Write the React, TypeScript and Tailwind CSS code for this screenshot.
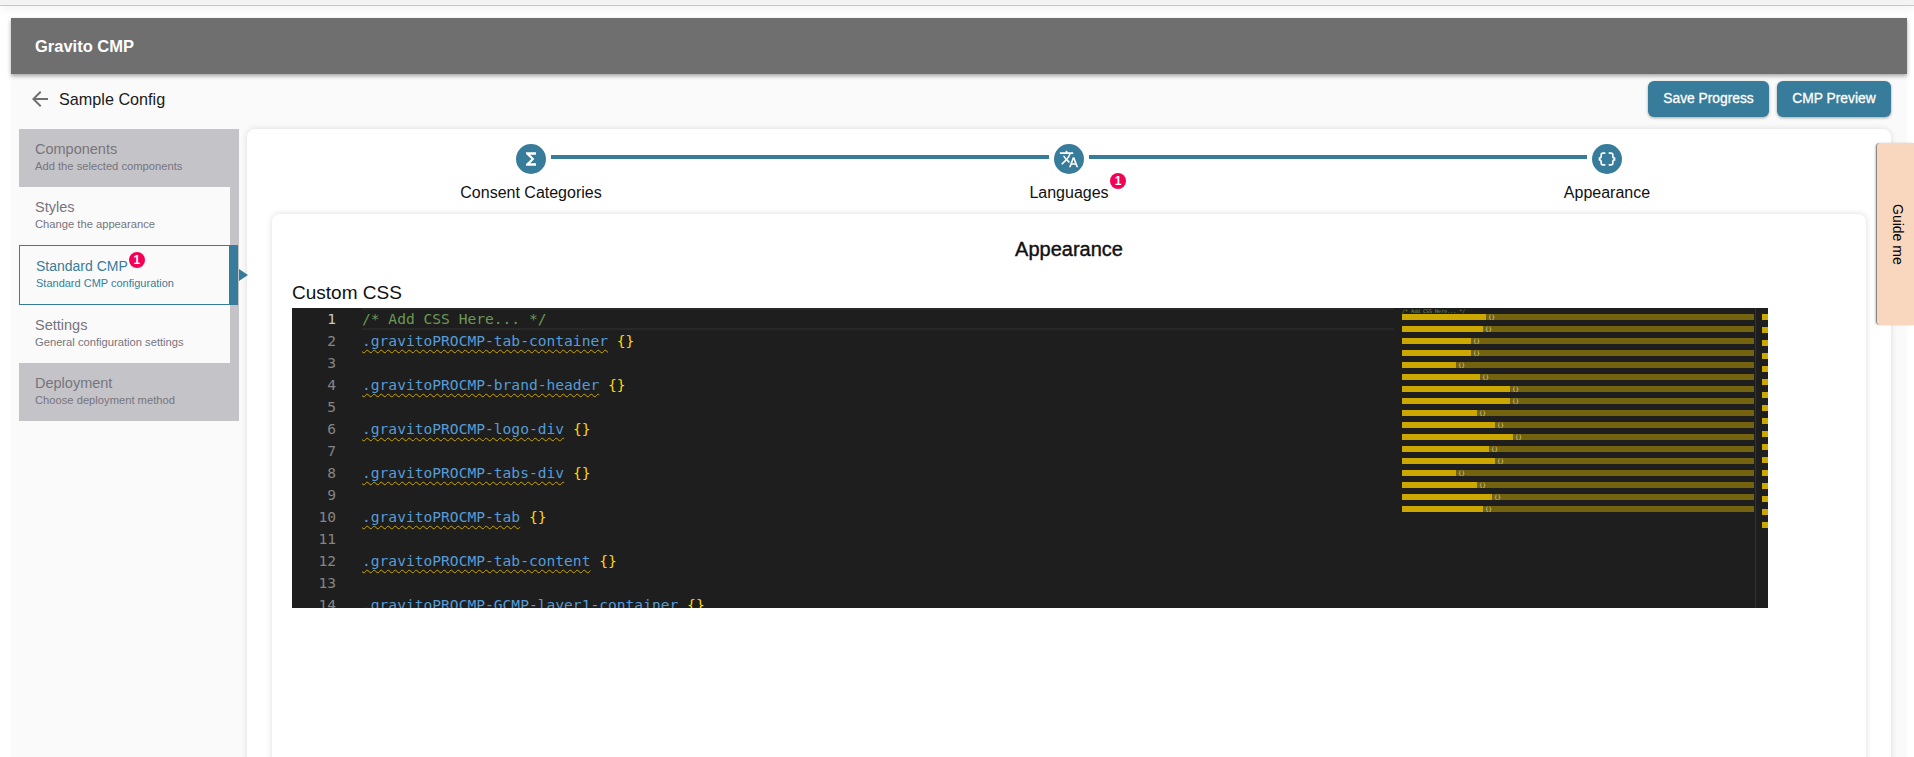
const lines = [
  "/* Add CSS Here... */",
  ".gravitoPROCMP-tab-container",
  "",
  ".gravitoPROCMP-brand-header",
  "",
  ".gravitoPROCMP-logo-div",
  "",
  ".gravitoPROCMP-tabs-div",
  "",
  ".gravitoPROCMP-tab",
  "",
  ".gravitoPROCMP-tab-content",
  "",
  ".gravitoPROCMP-GCMP-layer1-container",
];

const minimapBars = [84, 81, 69, 69, 54, 78, 108, 108, 75, 93, 111, 87, 93, 54, 75, 90, 81];

const navItems = [
  { title: "Components", sub: "Add the selected components", state: "disabled" },
  { title: "Styles", sub: "Change the appearance", state: "idle" },
  { title: "Standard CMP", sub: "Standard CMP configuration", state: "active" },
  { title: "Settings", sub: "General configuration settings", state: "idle" },
  { title: "Deployment", sub: "Choose deployment method", state: "disabled" },
];

function Badge() {
  return (
    <span className="flex h-4 w-4 items-center justify-center rounded-full bg-[#f50057] text-[12px] font-bold leading-none text-white">
      1
    </span>
  );
}

function StepCircle({ d }: { d: string }) {
  return (
    <div className="flex h-[30px] w-[30px] shrink-0 items-center justify-center rounded-full bg-[#387c9b]">
      <svg viewBox="0 0 24 24" className="h-5 w-5" fill="#fff">
        <path d={d} />
      </svg>
    </div>
  );
}

function Sidebar() {
  return (
    <div className="relative h-[292px] w-[220px] shrink-0 bg-[#c4c3c8]">
      {navItems.map((item) => {
        if (item.state === "active") {
          return (
            <div key={item.title} className="relative flex h-[60px] w-[219px] border border-[#387c9b] bg-[#fafafa]">
              <div className="flex-1 pl-[16px] pt-[10px] text-[#387c9b]">
                <div className="flex items-start text-[14px] leading-[20px]">
                  {item.title}
                  <span className="ml-[1px] mt-[-4px]">
                    <Badge />
                  </span>
                </div>
                <div className="text-[11px] leading-[15px]">{item.sub}</div>
              </div>
              <div className="w-[8px] bg-[#387c9b]" />
              <div className="absolute left-[219px] top-[23px] h-0 w-0 border-y-[6px] border-l-[9px] border-y-transparent border-l-[#387c9b]" />
            </div>
          );
        }
        return (
          <div
            key={item.title}
            className={
              item.state === "idle"
                ? "h-[58px] w-[211px] bg-[#fafafa] pl-[16px] pt-[10px] text-[#77757c]"
                : "h-[58px] w-[220px] pl-[16px] pt-[10px] text-[#77757c]"
            }
          >
            <div className="text-[14.5px] leading-[20px]">{item.title}</div>
            <div className="text-[11.2px] leading-[15px]">{item.sub}</div>
          </div>
        );
      })}
    </div>
  );
}

function Stepper() {
  return (
    <div className="h-[85px] pt-[15px]">
      <div className="flex items-start px-[254px]">
        <StepCircle d="M18 4H6v2l6.5 6L6 18v2h12v-3h-7l5-5-5-5h7z" />
        <div className="mx-[5px] mt-[11px] h-1 flex-1 bg-[#387c9b]" />
        <StepCircle d="m12.87 15.07-2.54-2.51.03-.03c1.74-1.94 2.98-4.17 3.71-6.53H17V4h-7V2H8v2H1v1.99h11.17C11.5 7.92 10.44 9.75 9 11.35 8.07 10.32 7.3 9.19 6.69 8h-2c.73 1.63 1.73 3.17 2.98 4.56l-5.09 5.02L4 19l5-5 3.11 3.11.76-2.04zM18.5 10h-2L12 22h2l1.12-3h4.75L21 22h2l-4.5-12zm-2.62 7 1.62-4.33L19.12 17h-3.24z" />
        <div className="mx-[5px] mt-[11px] h-1 flex-1 bg-[#387c9b]" />
        <StepCircle d="M4 7v2c0 .55-.45 1-1 1H2v4h1c.55 0 1 .45 1 1v2c0 1.65 1.35 3 3 3h3v-2H7c-.55 0-1-.45-1-1v-2c0-1.3-.84-2.42-2-2.83v-.34C5.16 11.42 6 10.3 6 9V7c0-.55.45-1 1-1h3V4H7C5.35 4 4 5.35 4 7zm17 3c-.55 0-1-.45-1-1V7c0-1.65-1.35-3-3-3h-3v2h3c.55 0 1 .45 1 1v2c0 1.3.84 2.42 2 2.83v.34c-1.16.41-2 1.52-2 2.83v2c0 .55-.45 1-1 1h-3v2h3c1.65 0 3-1.35 3-3v-2c0-.55.45-1 1-1h1v-4h-1z" />
      </div>
      <div className="mt-[8px] grid grid-cols-3 text-center text-[16px] leading-[22px] text-[#111]">
        <div>Consent Categories</div>
        <div className="relative">
          Languages
          <span className="absolute left-1/2 top-[-9px] ml-[41px]">
            <Badge />
          </span>
        </div>
        <div>Appearance</div>
      </div>
    </div>
  );
}

function Editor() {
  return (
    <div className="flex h-[300px] w-[1476px] overflow-hidden bg-[#1e1e1e] font-['DejaVu_Sans_Mono','Liberation_Mono',monospace] text-[14.6px] leading-[22px]">
      <div className="w-[1110px] shrink-0 pr-[8px]">
        {lines.map((line, i) => (
          <div key={i} className="flex h-[22px]">
            <div className={i === 0 ? "w-[44px] shrink-0 text-right text-[#c6c6c6]" : "w-[44px] shrink-0 text-right text-[#858585]"}>
              {i + 1}
            </div>
            {i === 0 ? (
              <div className="ml-[26px] flex-1 border-y-2 border-[#282828] leading-[18px] text-[#6a9955]">{line}</div>
            ) : (
              <div className="ml-[26px] flex-1 whitespace-pre">
                {line && (
                  <>
                    <span className="text-[#569cd6] underline decoration-[#cca700] decoration-wavy decoration-1 underline-offset-[3px]">
                      {line}
                    </span>
                    <span className="text-[#ffd700]"> {"{}"}</span>
                  </>
                )}
              </div>
            )}
          </div>
        ))}
      </div>
      <div className="w-[352px] shrink-0">
        <div className="h-[6px] whitespace-pre text-[5px] leading-[6px] text-[#6a9955]">/* Add CSS Here... */</div>
        <div className="flex flex-col gap-[6px]">
          {minimapBars.map((w, i) => (
            <div key={i} className="flex h-[6px] bg-[#73620e]">
              <div className="bg-[#cca700]" style={{ width: w }} />
              <div className="ml-[2px] text-[6px] leading-[6px] text-[#d8cf90]">{"{}"}</div>
            </div>
          ))}
        </div>
      </div>
      <div className="ml-[1px] flex-1 border-l border-[#333] pl-[6px] pt-[6px]">
        <div className="flex flex-col gap-[7px]">
          {minimapBars.map((_, i) => (
            <div key={i} className="h-[6px] w-full bg-[#cca700]" />
          ))}
        </div>
      </div>
    </div>
  );
}

export default function App() {
  return (
    <div className="relative h-screen overflow-hidden bg-white font-['Liberation_Sans',Arial,sans-serif]">
      <div className="h-[6px] border-b border-[#c8c8c8] bg-[#f3f3f3] shadow-[0_2px_10px_rgba(0,0,0,0.08)]" />
      <div className="ml-[11px] mr-[7px] mt-[12px] h-[739px] bg-[#fafafa]">
        <div className="flex h-[56px] items-center bg-[#6f6f6f] pl-[24px] text-[16.5px] font-bold text-white shadow-[0_2px_4px_rgba(0,0,0,0.35)]">
          Gravito CMP
        </div>
        <div className="flex h-[55px] items-start justify-between pr-[16px] pt-[7px]">
          <div className="flex items-center pl-[17px] pt-[6px]">
            <svg viewBox="0 0 24 24" className="h-[24px] w-[24px]" fill="#6f6f6f">
              <path d="M20 11H7.83l5.59-5.59L12 4l-8 8 8 8 1.41-1.41L7.83 13H20v-2z" />
            </svg>
            <span className="ml-[7px] text-[16.2px] text-[#1a1a1a]">Sample Config</span>
          </div>
          <div className="flex gap-[8px]">
            <button className="h-[36px] w-[121px] rounded-md bg-[#387c9b] pt-[1px] text-[13.8px] text-white shadow-[0_1px_3px_rgba(0,0,0,0.35)] [-webkit-text-stroke:0.3px]">
              Save Progress
            </button>
            <button className="h-[36px] w-[114px] rounded-md bg-[#387c9b] pt-[1px] text-[13.8px] text-white shadow-[0_1px_3px_rgba(0,0,0,0.35)] [-webkit-text-stroke:0.3px]">
              CMP Preview
            </button>
          </div>
        </div>
        <div className="flex pl-[8px] pr-[16px]">
          <Sidebar />
          <div className="ml-[8px] h-[700px] flex-1 rounded-lg bg-white px-[15px] shadow-[0_0_6px_rgba(0,0,0,0.12)]">
            <Stepper />
            <div className="mx-[10px] h-[600px] rounded-lg bg-white px-[20px] shadow-[0_0_6px_rgba(0,0,0,0.15)]">
              <h2 className="pt-[22px] text-center text-[20px] leading-[26px] text-[#111] [-webkit-text-stroke:0.4px]">Appearance</h2>
              <div className="mt-[18px] h-[28px] text-[19px] leading-[26px] text-[#111]">Custom CSS</div>
              <Editor />
            </div>
          </div>
        </div>
      </div>
      <div className="absolute right-0 top-[143px] flex h-[182px] w-[38px] items-center justify-center rounded-l border-l border-[#888] bg-[#f8d5ba]/95 shadow-[-1px_0_2px_rgba(0,0,0,0.2)]">
        <span className="pl-[3px] text-[14px] text-black [writing-mode:vertical-rl]">Guide me</span>
      </div>
    </div>
  );
}
